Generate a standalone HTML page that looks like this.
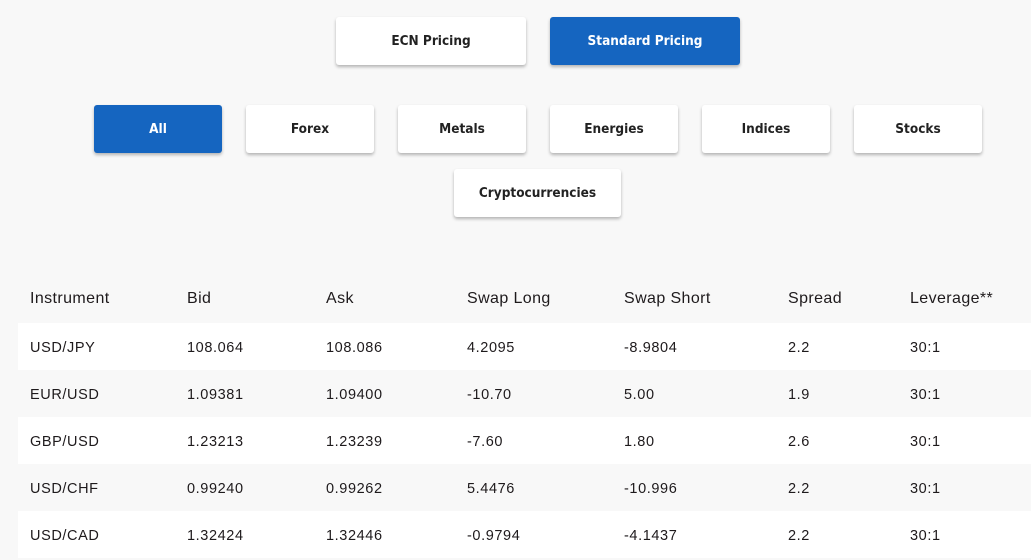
<!DOCTYPE html>
<html><head><meta charset="utf-8"><style>
html,body{margin:0;padding:0}
body{width:1031px;height:557px;overflow:hidden;background:#f8f8f8;position:relative;font-family:"Liberation Sans",sans-serif;color:#1e1a1c}
.b{position:absolute;height:48px;background:#fff;border-radius:3px;box-shadow:0 2px 3px rgba(0,0,0,.28);display:flex;align-items:center;justify-content:center;font-family:"DejaVu Sans Condensed","Liberation Sans",sans-serif;font-weight:bold;font-size:13.5px;color:#222;letter-spacing:0}
.b.on{background:#1565c0;color:#fff}
.row{position:absolute;left:18px;width:1013px;height:47px}
.row.w{background:#fff}
.c{position:absolute;top:2px;line-height:47px;font-size:14.5px;letter-spacing:.6px}
.h .c{font-size:16px;letter-spacing:.4px;top:1px}
</style></head><body>
<div class="b" style="left:336px;top:17px;width:190px">ECN Pricing</div>
<div class="b on" style="left:550px;top:17px;width:190px">Standard Pricing</div>
<div class="b on" style="left:94px;top:105px;width:128px">All</div>
<div class="b" style="left:246px;top:105px;width:128px">Forex</div>
<div class="b" style="left:398px;top:105px;width:128px">Metals</div>
<div class="b" style="left:550px;top:105px;width:128px">Energies</div>
<div class="b" style="left:702px;top:105px;width:128px">Indices</div>
<div class="b" style="left:854px;top:105px;width:128px">Stocks</div>
<div class="b" style="left:454px;top:169px;width:167px">Cryptocurrencies</div>

<div class="row h" style="top:274px"><span class="c" style="left:12px">Instrument</span><span class="c" style="left:169px">Bid</span><span class="c" style="left:308px">Ask</span><span class="c" style="left:449px">Swap Long</span><span class="c" style="left:606px">Swap Short</span><span class="c" style="left:770px">Spread</span><span class="c" style="left:892px">Leverage**</span></div>
<div class="row w" style="top:323px"><span class="c" style="left:12px">USD/JPY</span><span class="c" style="left:169px">108.064</span><span class="c" style="left:308px">108.086</span><span class="c" style="left:449px">4.2095</span><span class="c" style="left:606px">-8.9804</span><span class="c" style="left:770px">2.2</span><span class="c" style="left:892px">30:1</span></div>
<div class="row" style="top:370px"><span class="c" style="left:12px">EUR/USD</span><span class="c" style="left:169px">1.09381</span><span class="c" style="left:308px">1.09400</span><span class="c" style="left:449px">-10.70</span><span class="c" style="left:606px">5.00</span><span class="c" style="left:770px">1.9</span><span class="c" style="left:892px">30:1</span></div>
<div class="row w" style="top:417px"><span class="c" style="left:12px">GBP/USD</span><span class="c" style="left:169px">1.23213</span><span class="c" style="left:308px">1.23239</span><span class="c" style="left:449px">-7.60</span><span class="c" style="left:606px">1.80</span><span class="c" style="left:770px">2.6</span><span class="c" style="left:892px">30:1</span></div>
<div class="row" style="top:464px"><span class="c" style="left:12px">USD/CHF</span><span class="c" style="left:169px">0.99240</span><span class="c" style="left:308px">0.99262</span><span class="c" style="left:449px">5.4476</span><span class="c" style="left:606px">-10.996</span><span class="c" style="left:770px">2.2</span><span class="c" style="left:892px">30:1</span></div>
<div class="row w" style="top:511px"><span class="c" style="left:12px">USD/CAD</span><span class="c" style="left:169px">1.32424</span><span class="c" style="left:308px">1.32446</span><span class="c" style="left:449px">-0.9794</span><span class="c" style="left:606px">-4.1437</span><span class="c" style="left:770px">2.2</span><span class="c" style="left:892px">30:1</span></div>
</body></html>
